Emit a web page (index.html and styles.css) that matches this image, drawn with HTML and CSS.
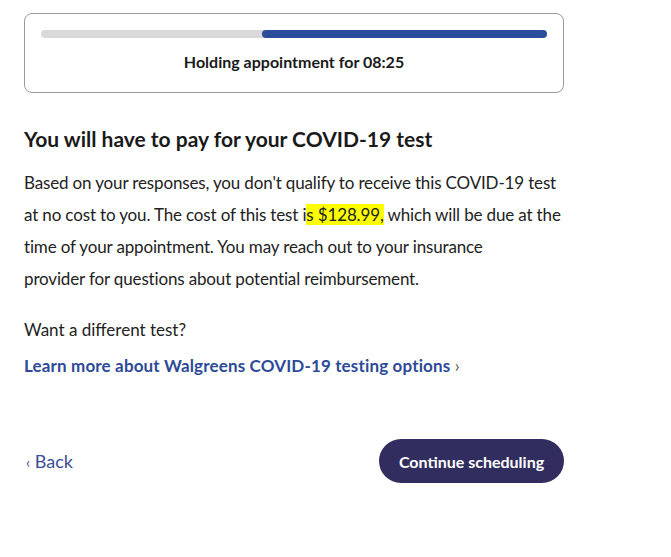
FILE: index.html
```html
<!DOCTYPE html>
<html>
<head>
<meta charset="utf-8">
<link rel="stylesheet" href="styles.css">
</head>
<body>
<div class="page">
  <div class="timer-card">
    <div class="progress"><div class="progress-fill" style="width:56.3%"></div></div>
    <div class="timer-text">Holding appointment for 08:25</div>
  </div>
  <h1 class="title">You will have to pay for your COVID-19 test</h1>
  <p class="body-text">Based on your responses, you don't qualify to receive this COVID-19 test at no cost to you. The cost of this test i<mark class="hl">s $128.99,</mark> which will be due at the time of your appointment. You may reach out to your insurance<br>provider for questions about potential reimbursement.</p>
  <p class="want">Want a different test?</p>
  <a class="learn" href="#">Learn more about Walgreens COVID-19 testing options <span class="chev">›</span></a>
  <div class="actions">
    <a class="back" href="#"><span class="chev">‹</span> Back</a>
    <button class="continue">Continue scheduling</button>
  </div>
</div>
</body>
</html>
```
FILE: styles.css
```css
html, body { margin: 0; padding: 0; background: #fff; }
body { font-family: Lato, "Noto Sans", sans-serif; color: #222; }
.page { width: 540px; margin-left: 24px; padding-top: 13px; }
.timer-card {
  border: 1px solid #9a9a9a;
  border-radius: 8px;
  padding: 16px 16px 0;
  box-sizing: border-box;
  height: 80px;
}
.progress { height: 8px; background: #d9d9d9; border-radius: 4px; display: flex; justify-content: flex-end; }
.progress-fill { height: 8px; background: #2a4d9c; border-radius: 4px; }
.timer-text { text-align: center; font-weight: 700; font-size: 16px; color: #1a1a1a; margin-top: 14px; }
.title { font-size: 21px; font-weight: 700; color: #1a1a1a; margin: 33px 0 0; line-height: 26px; }
.body-text { font-size: 17px; line-height: 32px; margin: 15px -4px 0 0; color: #222; letter-spacing: -0.15px; }
.hl { background: #ffff00; color: inherit; }
.want { font-size: 17px; line-height: 24px; margin: 23px 0 0; }
.learn { display: inline-block; margin-top: 12px; font-size: 17px; font-weight: 700; color: #2d4a98; text-decoration: none; line-height: 24px; letter-spacing: 0.15px; }
.learn .chev { font-weight: 400; color: #555; }
.actions { display: flex; justify-content: space-between; align-items: center; margin-top: 61px; }
.back { color: #3a4f93; font-size: 18px; text-decoration: none; padding-left: 2px; }
.back .chev { font-size: 15px; }
.continue {
  background: #312e5f; color: #fff; border: none; border-radius: 22px;
  height: 44px; width: 185px; font-family: inherit; font-weight: 700; font-size: 16px;
}
```
